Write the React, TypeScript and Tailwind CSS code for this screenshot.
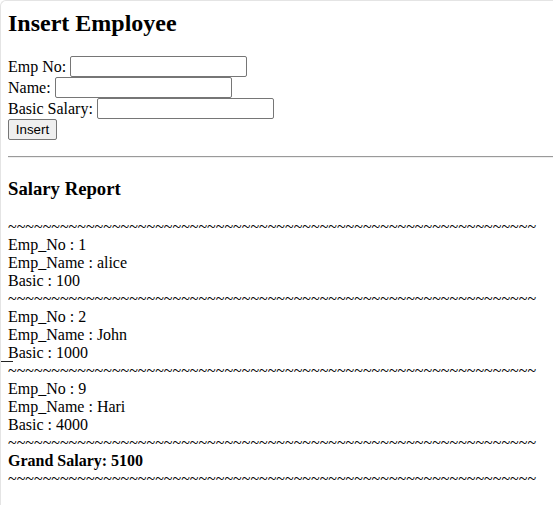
import React from "react";

const TILDES = "~".repeat(61);

type Emp = { no: number; name: string; basic: number };

const emps: Emp[] = [
  { no: 1, name: "alice", basic: 100 },
  { no: 2, name: "John", basic: 1000 },
  { no: 9, name: "Hari", basic: 4000 },
];

function Field({ label }: { label: string }) {
  return (
    <div className="flex h-[21px] items-center gap-[4px]">
      <span className="leading-[18px] whitespace-nowrap">{label}</span>
      <input
        type="text"
        className="h-[21px] w-[177px] rounded-[2px] border border-[#767676] bg-white px-[2px] text-[13.33px] outline-none"
      />
    </div>
  );
}

export default function App() {
  return (
    <div className="min-h-[505px] overflow-hidden rounded-tl-[6px] border-l border-t border-[#e4e4e4] bg-white pl-[7px] font-['Liberation_Serif','Times_New_Roman',serif] text-[16px] text-black">
      <h1 className="mt-[8px] text-[24px] font-bold leading-[28px]">Insert Employee</h1>
      <form className="mt-[19px] flex flex-col" onSubmit={(e) => e.preventDefault()}>
        <Field label="Emp No:" />
        <Field label="Name:" />
        <Field label="Basic Salary:" />
        <div className="flex h-[21px] items-center">
          <button
            type="submit"
            className="h-[21px] w-[49px] rounded-[2px] border border-[#767676] bg-[#efefef] p-0 text-center font-['Liberation_Sans',Arial,sans-serif] text-[13.33px] leading-[15px] text-black"
          >
            Insert
          </button>
        </div>
      </form>
      <div className="mt-[16px] h-[2px] border-b border-t border-b-[#eeeeee] border-t-[#9a9a9a]" />
      <h3 className="mt-[20px] text-[18.72px] font-bold leading-[22px]">Salary Report</h3>
      <div className="mt-[18px] flex flex-col leading-[18px]">
        <div className="whitespace-nowrap">{TILDES}</div>
        {emps.map((e) => (
          <React.Fragment key={e.no}>
            <div>Emp_No : {e.no}</div>
            <div>Emp_Name : {e.name}</div>
            <div className="relative">
              Basic : {e.basic}
              {e.no === 2 && (
                <span className="absolute left-[-8px] top-[17px] h-px w-[13px] bg-[#222]" />
              )}
            </div>
            <div className="whitespace-nowrap">{TILDES}</div>
          </React.Fragment>
        ))}
        <div className="font-bold">Grand Salary: 5100</div>
        <div className="whitespace-nowrap">{TILDES}</div>
      </div>
    </div>
  );
}
